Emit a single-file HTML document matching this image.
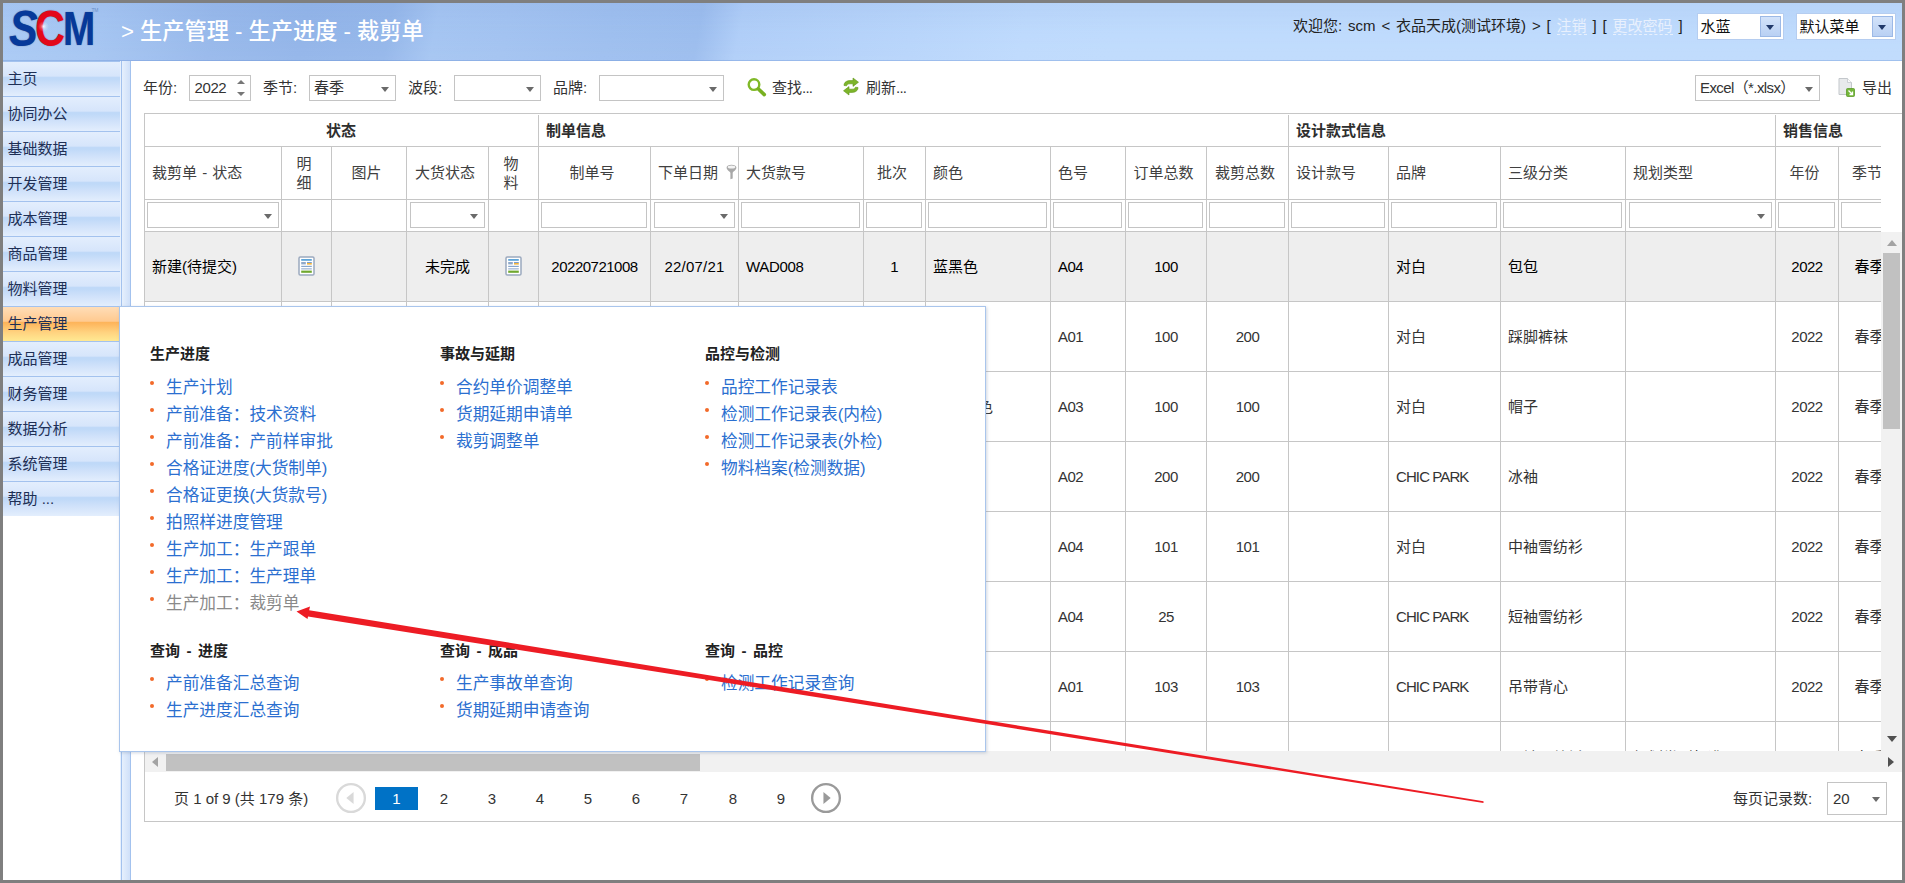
<!DOCTYPE html>
<html lang="zh-CN"><head><meta charset="utf-8"><title>SCM</title>
<style>
*{box-sizing:border-box;margin:0;padding:0}
html,body{width:1905px;height:883px;overflow:hidden;background:#fff}
body{font-family:"Liberation Sans", "Noto Sans CJK SC", sans-serif;font-size:15px;color:#333;position:relative}
.abs{position:absolute}
.t{position:absolute;white-space:nowrap;line-height:20px;height:20px}
.frame{position:absolute;background:#7f7f7f;z-index:100}
#hdr{position:absolute;left:3px;top:3px;width:1899px;height:58px;
 background:linear-gradient(100deg,#aacaf5 0px,#a5c5f2 100px,#98b9eb 210px,#93b5e9 300px,#95b7ea 385px,#a5c5f2 430px,#a3c3f1 500px,#9ebfef 600px,#9cbdee 690px,#b0cef8 730px,#b8d5fb 900px,#bedafd 1010px,#bfdbfd 1100px,#bfdbfd 1899px);}
#hdr:after{content:"";position:absolute;left:0;right:0;top:0;bottom:0;background:linear-gradient(180deg,rgba(110,145,205,.10),rgba(255,255,255,0) 55%,rgba(255,255,255,.04));border-bottom:1px solid rgba(110,150,215,.30)}
#title{font-weight:500;position:absolute;left:121px;top:17px;font-size:22.2px;line-height:30px;color:#fff;white-space:nowrap;z-index:2}
.hsel{position:absolute;top:13px;height:27px;background:#fff;border:1px solid #b5cdf0;z-index:2}
.hsel .b{position:absolute;right:2px;top:2px;width:21px;height:21px;border:1px solid #9cb9e6;background:linear-gradient(180deg,#d3e3fa,#b9d0f3)}
.hsel .b:after{content:"";position:absolute;left:5px;top:8px;border:4.5px solid transparent;border-top:5px solid #21396a;border-bottom:0}
.hsel span{position:absolute;left:2.5px;top:3px;line-height:20px;color:#111}
.mi{position:absolute;left:3px;width:117px;height:35px;border-top:1px solid #a3c2ee;
 background:linear-gradient(180deg,#e3eefd 0%,#d6e5fb 42%,#c0d9f8 44%,#bfd9f8 50%,#cfe1fa 70%,#e3eefd 100%);
 padding-left:4.5px;line-height:33px;color:#1e2f55;white-space:nowrap}
.mi.act{width:116px;background:linear-gradient(180deg,#ffddb7 0%,#ffca90 42%,#fdb45a 45%,#feba62 52%,#ffd380 75%,#ffe992 100%)}
.box{position:absolute;background:#fff;border:1px solid #c4c4c4}
.dd:after{content:"";position:absolute;right:6px;top:50%;margin-top:-1.5px;border:4.5px solid transparent;border-top:5px solid #6a6a6a;border-bottom:0}
.vl{position:absolute;width:1px;background:#c6c6c6}
.hl{position:absolute;height:1px;background:#c6c6c6}
.c{position:absolute;white-space:nowrap;line-height:20px;height:20px}
.cc{text-align:center}
#pop{position:absolute;left:119px;top:306px;width:867px;height:446px;background:#fff;border:1px solid #a9c5ec;box-shadow:1px 1px 3px rgba(120,140,170,.35);z-index:20}
.ph{word-spacing:2.3px;position:absolute;font-weight:bold;font-size:15px;line-height:20px;color:#222;white-space:nowrap}
.pl{position:absolute;font-size:16.7px;line-height:22px;color:#2b6fd0;white-space:nowrap}
.pl.g{color:#8a8a8a}
.pl:before{content:"";position:absolute;left:-16px;top:4px;width:4px;height:4px;border-radius:2px;background:#f26a2a}
.lg{position:absolute;font-weight:bold;font-size:40px;line-height:50px;transform-origin:0 0;white-space:nowrap;text-shadow:0 0 1px rgba(10,20,60,.55)}
.pg{position:absolute;top:787px;width:43px;height:23px;line-height:23px;text-align:center;color:#333}
</style></head>
<body>
<div id="hdr"></div>
<div class="abs" style="left:0;top:0;width:110px;height:58px;z-index:2;overflow:hidden"><div class="lg" style="left:8.9px;top:-3.2px;color:#06399a;font-style:italic;transform:scale(1.08,1.257)">S</div><div class="lg" style="left:34.6px;top:-3.1px;color:#e3081a;transform:scale(1.038,1.246)">C</div><div class="lg" style="left:63px;top:-3.3px;color:#06399a;transform:scale(0.965,1.225)">M</div><div class="abs" style="left:38px;top:21px;width:11px;height:11px;border-radius:6px;background:radial-gradient(circle,rgba(255,255,255,.85) 0,rgba(255,255,255,.25) 35%,rgba(255,255,255,0) 70%)"></div><div style="position:absolute;left:91.5px;top:7.5px;font-size:5px;line-height:5px;color:#6d8fc8;letter-spacing:-.3px">TM</div></div>
<div id="title">&gt; 生产管理 - 生产进度 - 裁剪单</div>
<div class="t" style="left:1293px;top:16px;z-index:2;color:#222;word-spacing:1.7px">欢迎您: scm &lt; 衣品天成(测试环境) &gt; [ <span style="color:#e8f0fd;border-bottom:1px dashed #e8f0fd">注销</span> ] [ <span style="color:#e8f0fd;border-bottom:1px dashed #e8f0fd">更改密码</span> ]</div>
<div class="hsel" style="left:1697px;width:87px"><span>水蓝</span><div class="b"></div></div>
<div class="hsel" style="left:1796px;width:100px"><span>默认菜单</span><div class="b"></div></div>
<div class="mi" style="top:61px">主页</div>
<div class="mi" style="top:96px">协同办公</div>
<div class="mi" style="top:131px">基础数据</div>
<div class="mi" style="top:166px">开发管理</div>
<div class="mi" style="top:201px">成本管理</div>
<div class="mi" style="top:236px">商品管理</div>
<div class="mi" style="top:271px">物料管理</div>
<div class="mi act" style="top:306px">生产管理</div>
<div class="mi" style="top:341px">成品管理</div>
<div class="mi" style="top:376px">财务管理</div>
<div class="mi" style="top:411px">数据分析</div>
<div class="mi" style="top:446px">系统管理</div>
<div class="mi" style="top:481px">帮助 ...</div>
<div class="abs" style="left:120px;top:61px;width:1px;height:819px;background:#e8f1fd"></div>
<div class="abs" style="left:121px;top:61px;width:10px;height:819px;border-left:1px solid #a3c2ee;border-right:1px solid #a3c2ee;background:linear-gradient(90deg,#e6f0fd,#cfe0f9)"></div>
<div class="t" style="left:143px;top:78px">年份:</div>
<div class="box" style="left:189px;top:75px;width:62px;height:26px"><span class="t" style="left:4.5px;top:2px;letter-spacing:-.4px">2022</span><i class="abs" style="left:47px;top:4px;border:4px solid transparent;border-bottom:4.5px solid #777;border-top:0"></i><i class="abs" style="left:47px;top:15.5px;border:4px solid transparent;border-top:4.5px solid #777;border-bottom:0"></i></div>
<div class="t" style="left:263px;top:78px">季节:</div>
<div class="box dd" style="left:309px;top:75px;width:87px;height:26px"><span class="t" style="left:4px;top:2px">春季</span></div>
<div class="t" style="left:408px;top:78px">波段:</div>
<div class="box dd" style="left:454px;top:75px;width:87px;height:26px"></div>
<div class="t" style="left:553px;top:78px">品牌:</div>
<div class="box dd" style="left:599px;top:75px;width:125px;height:26px"></div>
<svg class="abs" style="left:746px;top:77px" width="22" height="22" viewBox="0 0 22 22"><circle cx="8" cy="7.6" r="5.3" fill="none" stroke="#80b928" stroke-width="2.4"/><line x1="12.4" y1="12" x2="18.3" y2="17.6" stroke="#78b020" stroke-width="3.6" stroke-linecap="round"/></svg>
<div class="t" style="left:772px;top:78px">查找<span style="letter-spacing:-.8px">...</span></div>
<svg class="abs" style="left:842px;top:77px" width="18" height="19" viewBox="0 0 18 19"><path d="M2 8.5 C2 5 5 3.6 8 3.6 L11 3.6 L11 1 L16.5 5.2 L11 9.4 L11 6.8 L8 6.8 C6 6.8 5 7.4 4.6 8.8 Z" fill="#7db52a" stroke="#5f9418" stroke-width=".6"/><path d="M16 10.5 C16 14 13 15.4 10 15.4 L7 15.4 L7 18 L1.5 13.8 L7 9.6 L7 12.2 L10 12.2 C12 12.2 13 11.6 13.4 10.2 Z" fill="#7db52a" stroke="#5f9418" stroke-width=".6"/></svg>
<div class="t" style="left:866px;top:78px">刷新<span style="letter-spacing:-.8px">...</span></div>
<div class="box dd" style="left:1695px;top:75px;width:125px;height:26px"><span class="t" style="left:4px;top:2px;letter-spacing:-.6px">Excel（*.xlsx）</span></div>
<svg class="abs" style="left:1838px;top:78px" width="18" height="19" viewBox="0 0 18 19"><path d="M1 .5 H9.5 L13.5 4.5 V16.5 H1 Z" fill="#e8eaec" stroke="#c3c7cb" stroke-width="1"/><path d="M9.5 .5 V4.5 H13.5" fill="#fafafa" stroke="#c3c7cb" stroke-width=".8"/><rect x="8.5" y="10.5" width="8" height="8" rx="1" fill="#74b63a" stroke="#5a9a28" stroke-width=".8"/><path d="M10.5 12.5 L14.5 16.5 M14.5 13.5 V16.5 H11.5" stroke="#fff" stroke-width="1.3" fill="none"/></svg>
<div class="t" style="left:1862px;top:78px">导出</div>
<div class="abs" style="left:144px;top:113px;width:1758px;height:709px;overflow:hidden" id="grid">
<div class="abs" style="left:0;top:119px;width:1737px;height:69px;background:#eeeeee"></div>
<div class="hl" style="left:0;top:0;width:1758px"></div>
<div class="hl" style="left:0;top:33px;width:1737px"></div>
<div class="hl" style="left:0;top:86px;width:1737px"></div>
<div class="hl" style="left:0;top:118px;width:1737px"></div>
<div class="hl" style="left:0;top:188px;width:1737px"></div>
<div class="hl" style="left:0;top:258px;width:1737px"></div>
<div class="hl" style="left:0;top:328px;width:1737px"></div>
<div class="hl" style="left:0;top:398px;width:1737px"></div>
<div class="hl" style="left:0;top:468px;width:1737px"></div>
<div class="hl" style="left:0;top:538px;width:1737px"></div>
<div class="hl" style="left:0;top:608px;width:1737px"></div>
<div class="vl" style="left:0;top:0;height:709px"></div>
<div class="vl" style="left:137px;top:33px;height:605px"></div>
<div class="vl" style="left:187px;top:33px;height:605px"></div>
<div class="vl" style="left:262px;top:33px;height:605px"></div>
<div class="vl" style="left:344px;top:33px;height:605px"></div>
<div class="vl" style="left:394px;top:2px;height:636px"></div>
<div class="vl" style="left:506px;top:33px;height:605px"></div>
<div class="vl" style="left:594px;top:33px;height:605px"></div>
<div class="vl" style="left:719px;top:33px;height:605px"></div>
<div class="vl" style="left:781px;top:33px;height:605px"></div>
<div class="vl" style="left:906px;top:33px;height:605px"></div>
<div class="vl" style="left:981px;top:33px;height:605px"></div>
<div class="vl" style="left:1062px;top:33px;height:605px"></div>
<div class="vl" style="left:1144px;top:2px;height:636px"></div>
<div class="vl" style="left:1244px;top:33px;height:605px"></div>
<div class="vl" style="left:1356px;top:33px;height:605px"></div>
<div class="vl" style="left:1481px;top:33px;height:605px"></div>
<div class="vl" style="left:1631px;top:2px;height:636px"></div>
<div class="vl" style="left:1694px;top:33px;height:605px"></div>
<div class="c cc" style="left:0px;top:8px;width:394px;font-weight:bold;color:#2e2e2e;">状态</div>
<div class="c" style="left:402px;top:8px;font-weight:bold;color:#2e2e2e;">制单信息</div>
<div class="c" style="left:1152px;top:8px;font-weight:bold;color:#2e2e2e;">设计款式信息</div>
<div class="c" style="left:1639px;top:8px;font-weight:bold;color:#2e2e2e;">销售信息</div>
<div class="c" style="left:8px;top:50px;color:#404040;word-spacing:1px;">裁剪单 - 状态</div>
<div class="c cc" style="left:135px;top:41px;width:50px;height:40px;line-height:19px;color:#404040">明<br>细</div>
<div class="c cc" style="left:185px;top:50px;width:75px;color:#404040;">图片</div>
<div class="c cc" style="left:260px;top:50px;width:82px;color:#404040;">大货状态</div>
<div class="c cc" style="left:342px;top:41px;width:50px;height:40px;line-height:19px;color:#404040">物<br>料</div>
<div class="c cc" style="left:392px;top:50px;width:112px;color:#404040;">制单号</div>
<div class="c" style="left:514px;top:50px;color:#404040;word-spacing:1px;">下单日期</div>
<div class="c" style="left:602px;top:50px;color:#404040;word-spacing:1px;">大货款号</div>
<div class="c cc" style="left:717px;top:50px;width:62px;color:#404040;">批次</div>
<div class="c" style="left:789px;top:50px;color:#404040;word-spacing:1px;">颜色</div>
<div class="c" style="left:914px;top:50px;color:#404040;word-spacing:1px;">色号</div>
<div class="c cc" style="left:979px;top:50px;width:81px;color:#404040;">订单总数</div>
<div class="c cc" style="left:1060px;top:50px;width:82px;color:#404040;">裁剪总数</div>
<div class="c" style="left:1152px;top:50px;color:#404040;word-spacing:1px;">设计款号</div>
<div class="c" style="left:1252px;top:50px;color:#404040;word-spacing:1px;">品牌</div>
<div class="c" style="left:1364px;top:50px;color:#404040;word-spacing:1px;">三级分类</div>
<div class="c" style="left:1489px;top:50px;color:#404040;word-spacing:1px;">规划类型</div>
<div class="c cc" style="left:1629px;top:50px;width:63px;color:#404040;">年份</div>
<div class="c cc" style="left:1692px;top:50px;width:62px;color:#404040;">季节</div>
<svg class="abs" style="left:581px;top:50px" width="13" height="17" viewBox="0 0 13 17"><path d="M1.6 4.6 C1.6 0.9 11.4 0.9 11.4 4.6 C11.4 7.4 8 8.4 7.7 10 L7.7 15.4 L5.4 16.2 L5.4 10 C5 8.4 1.6 7.4 1.6 4.6 Z" fill="#a8a8a8"/><ellipse cx="6.5" cy="4" rx="3.8" ry="1.5" fill="#f3f3f3"/></svg>
<div class="box dd" style="left:3px;top:89px;width:132px;height:26px"></div>
<div class="box dd" style="left:266px;top:89px;width:75px;height:26px"></div>
<div class="box" style="left:397px;top:89px;width:106px;height:26px"></div>
<div class="box dd" style="left:510px;top:89px;width:81px;height:26px"></div>
<div class="box" style="left:597px;top:89px;width:119px;height:26px"></div>
<div class="box" style="left:722px;top:89px;width:56px;height:26px"></div>
<div class="box" style="left:784px;top:89px;width:119px;height:26px"></div>
<div class="box" style="left:909px;top:89px;width:69px;height:26px"></div>
<div class="box" style="left:984px;top:89px;width:75px;height:26px"></div>
<div class="box" style="left:1065px;top:89px;width:76px;height:26px"></div>
<div class="box" style="left:1147px;top:89px;width:94px;height:26px"></div>
<div class="box" style="left:1247px;top:89px;width:106px;height:26px"></div>
<div class="box" style="left:1359px;top:89px;width:119px;height:26px"></div>
<div class="box dd" style="left:1485px;top:89px;width:143px;height:26px"></div>
<div class="box" style="left:1634px;top:89px;width:57px;height:26px"></div>
<div class="box" style="left:1697px;top:89px;width:60px;height:26px"></div>
<div class="c" style="left:8px;top:144px;color:#000;">新建(待提交)</div>
<svg class="abs" style="left:154px;top:142.5px" width="17" height="20" viewBox="0 0 17 20"><rect x="1" y="1" width="15" height="18" rx="1.3" fill="#fff" stroke="#9ba9be" stroke-width="1.5"/><rect x="3.2" y="3" width="10.6" height="1.8" fill="#5fa5d8"/><rect x="3.2" y="6" width="4.6" height="2.4" fill="#8fa9c9"/><rect x="9" y="6" width="4.8" height="1" fill="#7c9fd0"/><rect x="9" y="7" width="4.8" height="1.6" fill="#f0b43c"/><rect x="3.2" y="9.8" width="10.6" height="1.2" fill="#86a6cc"/><rect x="3.2" y="12" width="10.6" height="1.6" fill="#b4c6de"/><rect x="3.2" y="14.6" width="10.6" height="2.2" fill="#6fa72e"/></svg>
<div class="c cc" style="left:262px;top:144px;width:83px;color:#000;">未完成</div>
<svg class="abs" style="left:361px;top:142.5px" width="17" height="20" viewBox="0 0 17 20"><rect x="1" y="1" width="15" height="18" rx="1.3" fill="#fff" stroke="#9ba9be" stroke-width="1.5"/><rect x="3.2" y="3" width="10.6" height="1.8" fill="#5fa5d8"/><rect x="3.2" y="6" width="4.6" height="2.4" fill="#8fa9c9"/><rect x="9" y="6" width="4.8" height="1" fill="#7c9fd0"/><rect x="9" y="7" width="4.8" height="1.6" fill="#f0b43c"/><rect x="3.2" y="9.8" width="10.6" height="1.2" fill="#86a6cc"/><rect x="3.2" y="12" width="10.6" height="1.6" fill="#b4c6de"/><rect x="3.2" y="14.6" width="10.6" height="2.2" fill="#6fa72e"/></svg>
<div class="c cc" style="left:394px;top:144px;width:113px;letter-spacing:-0.5px;color:#000;">20220721008</div>
<div class="c cc" style="left:506px;top:144px;width:89px;letter-spacing:0.2px;color:#000;">22/07/21</div>
<div class="c" style="left:602px;top:144px;letter-spacing:-0.3px;color:#000;">WAD008</div>
<div class="c cc" style="left:719px;top:144px;width:63px;color:#000;">1</div>
<div class="c" style="left:789px;top:144px;color:#000;">蓝黑色</div>
<div class="c" style="left:914px;top:144px;letter-spacing:-0.5px;color:#000;">A04</div>
<div class="c cc" style="left:981px;top:144px;width:82px;letter-spacing:-0.5px;color:#000;">100</div>
<div class="c" style="left:1252px;top:144px;color:#000;">对白</div>
<div class="c" style="left:1364px;top:144px;color:#000;">包包</div>
<div class="c cc" style="left:1631px;top:144px;width:64px;letter-spacing:-0.5px;color:#000;">2022</div>
<div class="c cc" style="left:1694px;top:144px;width:63px;color:#000;">春季</div>
<div class="c" style="left:8px;top:214px;">新建(待提交)</div>
<svg class="abs" style="left:154px;top:212.5px" width="17" height="20" viewBox="0 0 17 20"><rect x="1" y="1" width="15" height="18" rx="1.3" fill="#fff" stroke="#9ba9be" stroke-width="1.5"/><rect x="3.2" y="3" width="10.6" height="1.8" fill="#5fa5d8"/><rect x="3.2" y="6" width="4.6" height="2.4" fill="#8fa9c9"/><rect x="9" y="6" width="4.8" height="1" fill="#7c9fd0"/><rect x="9" y="7" width="4.8" height="1.6" fill="#f0b43c"/><rect x="3.2" y="9.8" width="10.6" height="1.2" fill="#86a6cc"/><rect x="3.2" y="12" width="10.6" height="1.6" fill="#b4c6de"/><rect x="3.2" y="14.6" width="10.6" height="2.2" fill="#6fa72e"/></svg>
<div class="c cc" style="left:262px;top:214px;width:83px;">未完成</div>
<svg class="abs" style="left:361px;top:212.5px" width="17" height="20" viewBox="0 0 17 20"><rect x="1" y="1" width="15" height="18" rx="1.3" fill="#fff" stroke="#9ba9be" stroke-width="1.5"/><rect x="3.2" y="3" width="10.6" height="1.8" fill="#5fa5d8"/><rect x="3.2" y="6" width="4.6" height="2.4" fill="#8fa9c9"/><rect x="9" y="6" width="4.8" height="1" fill="#7c9fd0"/><rect x="9" y="7" width="4.8" height="1.6" fill="#f0b43c"/><rect x="3.2" y="9.8" width="10.6" height="1.2" fill="#86a6cc"/><rect x="3.2" y="12" width="10.6" height="1.6" fill="#b4c6de"/><rect x="3.2" y="14.6" width="10.6" height="2.2" fill="#6fa72e"/></svg>
<div class="c cc" style="left:394px;top:214px;width:113px;letter-spacing:-0.5px;">20220721007</div>
<div class="c cc" style="left:506px;top:214px;width:89px;letter-spacing:0.2px;">22/07/21</div>
<div class="c" style="left:602px;top:214px;letter-spacing:-0.3px;">WAD007</div>
<div class="c cc" style="left:719px;top:214px;width:63px;">1</div>
<div class="c" style="left:789px;top:214px;">黑色</div>
<div class="c" style="left:914px;top:214px;letter-spacing:-0.5px;">A01</div>
<div class="c cc" style="left:981px;top:214px;width:82px;letter-spacing:-0.5px;">100</div>
<div class="c cc" style="left:1062px;top:214px;width:83px;letter-spacing:-0.5px;">200</div>
<div class="c" style="left:1252px;top:214px;">对白</div>
<div class="c" style="left:1364px;top:214px;">踩脚裤袜</div>
<div class="c cc" style="left:1631px;top:214px;width:64px;letter-spacing:-0.5px;">2022</div>
<div class="c cc" style="left:1694px;top:214px;width:63px;">春季</div>
<div class="c" style="left:8px;top:284px;">新建(待提交)</div>
<svg class="abs" style="left:154px;top:282.5px" width="17" height="20" viewBox="0 0 17 20"><rect x="1" y="1" width="15" height="18" rx="1.3" fill="#fff" stroke="#9ba9be" stroke-width="1.5"/><rect x="3.2" y="3" width="10.6" height="1.8" fill="#5fa5d8"/><rect x="3.2" y="6" width="4.6" height="2.4" fill="#8fa9c9"/><rect x="9" y="6" width="4.8" height="1" fill="#7c9fd0"/><rect x="9" y="7" width="4.8" height="1.6" fill="#f0b43c"/><rect x="3.2" y="9.8" width="10.6" height="1.2" fill="#86a6cc"/><rect x="3.2" y="12" width="10.6" height="1.6" fill="#b4c6de"/><rect x="3.2" y="14.6" width="10.6" height="2.2" fill="#6fa72e"/></svg>
<div class="c cc" style="left:262px;top:284px;width:83px;">未完成</div>
<svg class="abs" style="left:361px;top:282.5px" width="17" height="20" viewBox="0 0 17 20"><rect x="1" y="1" width="15" height="18" rx="1.3" fill="#fff" stroke="#9ba9be" stroke-width="1.5"/><rect x="3.2" y="3" width="10.6" height="1.8" fill="#5fa5d8"/><rect x="3.2" y="6" width="4.6" height="2.4" fill="#8fa9c9"/><rect x="9" y="6" width="4.8" height="1" fill="#7c9fd0"/><rect x="9" y="7" width="4.8" height="1.6" fill="#f0b43c"/><rect x="3.2" y="9.8" width="10.6" height="1.2" fill="#86a6cc"/><rect x="3.2" y="12" width="10.6" height="1.6" fill="#b4c6de"/><rect x="3.2" y="14.6" width="10.6" height="2.2" fill="#6fa72e"/></svg>
<div class="c cc" style="left:394px;top:284px;width:113px;letter-spacing:-0.5px;">20220721006</div>
<div class="c cc" style="left:506px;top:284px;width:89px;letter-spacing:0.2px;">22/07/21</div>
<div class="c" style="left:602px;top:284px;letter-spacing:-0.3px;">WAD006</div>
<div class="c cc" style="left:719px;top:284px;width:63px;">1</div>
<div class="c" style="left:789px;top:284px;">深花灰色</div>
<div class="c" style="left:914px;top:284px;letter-spacing:-0.5px;">A03</div>
<div class="c cc" style="left:981px;top:284px;width:82px;letter-spacing:-0.5px;">100</div>
<div class="c cc" style="left:1062px;top:284px;width:83px;letter-spacing:-0.5px;">100</div>
<div class="c" style="left:1252px;top:284px;">对白</div>
<div class="c" style="left:1364px;top:284px;">帽子</div>
<div class="c cc" style="left:1631px;top:284px;width:64px;letter-spacing:-0.5px;">2022</div>
<div class="c cc" style="left:1694px;top:284px;width:63px;">春季</div>
<div class="c" style="left:8px;top:354px;">新建(待提交)</div>
<svg class="abs" style="left:154px;top:352.5px" width="17" height="20" viewBox="0 0 17 20"><rect x="1" y="1" width="15" height="18" rx="1.3" fill="#fff" stroke="#9ba9be" stroke-width="1.5"/><rect x="3.2" y="3" width="10.6" height="1.8" fill="#5fa5d8"/><rect x="3.2" y="6" width="4.6" height="2.4" fill="#8fa9c9"/><rect x="9" y="6" width="4.8" height="1" fill="#7c9fd0"/><rect x="9" y="7" width="4.8" height="1.6" fill="#f0b43c"/><rect x="3.2" y="9.8" width="10.6" height="1.2" fill="#86a6cc"/><rect x="3.2" y="12" width="10.6" height="1.6" fill="#b4c6de"/><rect x="3.2" y="14.6" width="10.6" height="2.2" fill="#6fa72e"/></svg>
<div class="c cc" style="left:262px;top:354px;width:83px;">未完成</div>
<svg class="abs" style="left:361px;top:352.5px" width="17" height="20" viewBox="0 0 17 20"><rect x="1" y="1" width="15" height="18" rx="1.3" fill="#fff" stroke="#9ba9be" stroke-width="1.5"/><rect x="3.2" y="3" width="10.6" height="1.8" fill="#5fa5d8"/><rect x="3.2" y="6" width="4.6" height="2.4" fill="#8fa9c9"/><rect x="9" y="6" width="4.8" height="1" fill="#7c9fd0"/><rect x="9" y="7" width="4.8" height="1.6" fill="#f0b43c"/><rect x="3.2" y="9.8" width="10.6" height="1.2" fill="#86a6cc"/><rect x="3.2" y="12" width="10.6" height="1.6" fill="#b4c6de"/><rect x="3.2" y="14.6" width="10.6" height="2.2" fill="#6fa72e"/></svg>
<div class="c cc" style="left:394px;top:354px;width:113px;letter-spacing:-0.5px;">20220721005</div>
<div class="c cc" style="left:506px;top:354px;width:89px;letter-spacing:0.2px;">22/07/21</div>
<div class="c" style="left:602px;top:354px;letter-spacing:-0.3px;">WAD005</div>
<div class="c cc" style="left:719px;top:354px;width:63px;">1</div>
<div class="c" style="left:789px;top:354px;">白色</div>
<div class="c" style="left:914px;top:354px;letter-spacing:-0.5px;">A02</div>
<div class="c cc" style="left:981px;top:354px;width:82px;letter-spacing:-0.5px;">200</div>
<div class="c cc" style="left:1062px;top:354px;width:83px;letter-spacing:-0.5px;">200</div>
<div class="c" style="left:1252px;top:354px;letter-spacing:-0.9px;">CHIC PARK</div>
<div class="c" style="left:1364px;top:354px;">冰袖</div>
<div class="c cc" style="left:1631px;top:354px;width:64px;letter-spacing:-0.5px;">2022</div>
<div class="c cc" style="left:1694px;top:354px;width:63px;">春季</div>
<div class="c" style="left:8px;top:424px;">新建(待提交)</div>
<svg class="abs" style="left:154px;top:422.5px" width="17" height="20" viewBox="0 0 17 20"><rect x="1" y="1" width="15" height="18" rx="1.3" fill="#fff" stroke="#9ba9be" stroke-width="1.5"/><rect x="3.2" y="3" width="10.6" height="1.8" fill="#5fa5d8"/><rect x="3.2" y="6" width="4.6" height="2.4" fill="#8fa9c9"/><rect x="9" y="6" width="4.8" height="1" fill="#7c9fd0"/><rect x="9" y="7" width="4.8" height="1.6" fill="#f0b43c"/><rect x="3.2" y="9.8" width="10.6" height="1.2" fill="#86a6cc"/><rect x="3.2" y="12" width="10.6" height="1.6" fill="#b4c6de"/><rect x="3.2" y="14.6" width="10.6" height="2.2" fill="#6fa72e"/></svg>
<div class="c cc" style="left:262px;top:424px;width:83px;">未完成</div>
<svg class="abs" style="left:361px;top:422.5px" width="17" height="20" viewBox="0 0 17 20"><rect x="1" y="1" width="15" height="18" rx="1.3" fill="#fff" stroke="#9ba9be" stroke-width="1.5"/><rect x="3.2" y="3" width="10.6" height="1.8" fill="#5fa5d8"/><rect x="3.2" y="6" width="4.6" height="2.4" fill="#8fa9c9"/><rect x="9" y="6" width="4.8" height="1" fill="#7c9fd0"/><rect x="9" y="7" width="4.8" height="1.6" fill="#f0b43c"/><rect x="3.2" y="9.8" width="10.6" height="1.2" fill="#86a6cc"/><rect x="3.2" y="12" width="10.6" height="1.6" fill="#b4c6de"/><rect x="3.2" y="14.6" width="10.6" height="2.2" fill="#6fa72e"/></svg>
<div class="c cc" style="left:394px;top:424px;width:113px;letter-spacing:-0.5px;">20220721004</div>
<div class="c cc" style="left:506px;top:424px;width:89px;letter-spacing:0.2px;">22/07/21</div>
<div class="c" style="left:602px;top:424px;letter-spacing:-0.3px;">WAD004</div>
<div class="c cc" style="left:719px;top:424px;width:63px;">1</div>
<div class="c" style="left:789px;top:424px;">蓝黑色</div>
<div class="c" style="left:914px;top:424px;letter-spacing:-0.5px;">A04</div>
<div class="c cc" style="left:981px;top:424px;width:82px;letter-spacing:-0.5px;">101</div>
<div class="c cc" style="left:1062px;top:424px;width:83px;letter-spacing:-0.5px;">101</div>
<div class="c" style="left:1252px;top:424px;">对白</div>
<div class="c" style="left:1364px;top:424px;">中袖雪纺衫</div>
<div class="c cc" style="left:1631px;top:424px;width:64px;letter-spacing:-0.5px;">2022</div>
<div class="c cc" style="left:1694px;top:424px;width:63px;">春季</div>
<div class="c" style="left:8px;top:494px;">新建(待提交)</div>
<svg class="abs" style="left:154px;top:492.5px" width="17" height="20" viewBox="0 0 17 20"><rect x="1" y="1" width="15" height="18" rx="1.3" fill="#fff" stroke="#9ba9be" stroke-width="1.5"/><rect x="3.2" y="3" width="10.6" height="1.8" fill="#5fa5d8"/><rect x="3.2" y="6" width="4.6" height="2.4" fill="#8fa9c9"/><rect x="9" y="6" width="4.8" height="1" fill="#7c9fd0"/><rect x="9" y="7" width="4.8" height="1.6" fill="#f0b43c"/><rect x="3.2" y="9.8" width="10.6" height="1.2" fill="#86a6cc"/><rect x="3.2" y="12" width="10.6" height="1.6" fill="#b4c6de"/><rect x="3.2" y="14.6" width="10.6" height="2.2" fill="#6fa72e"/></svg>
<div class="c cc" style="left:262px;top:494px;width:83px;">未完成</div>
<svg class="abs" style="left:361px;top:492.5px" width="17" height="20" viewBox="0 0 17 20"><rect x="1" y="1" width="15" height="18" rx="1.3" fill="#fff" stroke="#9ba9be" stroke-width="1.5"/><rect x="3.2" y="3" width="10.6" height="1.8" fill="#5fa5d8"/><rect x="3.2" y="6" width="4.6" height="2.4" fill="#8fa9c9"/><rect x="9" y="6" width="4.8" height="1" fill="#7c9fd0"/><rect x="9" y="7" width="4.8" height="1.6" fill="#f0b43c"/><rect x="3.2" y="9.8" width="10.6" height="1.2" fill="#86a6cc"/><rect x="3.2" y="12" width="10.6" height="1.6" fill="#b4c6de"/><rect x="3.2" y="14.6" width="10.6" height="2.2" fill="#6fa72e"/></svg>
<div class="c cc" style="left:394px;top:494px;width:113px;letter-spacing:-0.5px;">20220721003</div>
<div class="c cc" style="left:506px;top:494px;width:89px;letter-spacing:0.2px;">22/07/21</div>
<div class="c" style="left:602px;top:494px;letter-spacing:-0.3px;">WAD003</div>
<div class="c cc" style="left:719px;top:494px;width:63px;">1</div>
<div class="c" style="left:789px;top:494px;">蓝黑色</div>
<div class="c" style="left:914px;top:494px;letter-spacing:-0.5px;">A04</div>
<div class="c cc" style="left:981px;top:494px;width:82px;letter-spacing:-0.5px;">25</div>
<div class="c" style="left:1252px;top:494px;letter-spacing:-0.9px;">CHIC PARK</div>
<div class="c" style="left:1364px;top:494px;">短袖雪纺衫</div>
<div class="c cc" style="left:1631px;top:494px;width:64px;letter-spacing:-0.5px;">2022</div>
<div class="c cc" style="left:1694px;top:494px;width:63px;">春季</div>
<div class="c" style="left:8px;top:564px;">新建(待提交)</div>
<svg class="abs" style="left:154px;top:562.5px" width="17" height="20" viewBox="0 0 17 20"><rect x="1" y="1" width="15" height="18" rx="1.3" fill="#fff" stroke="#9ba9be" stroke-width="1.5"/><rect x="3.2" y="3" width="10.6" height="1.8" fill="#5fa5d8"/><rect x="3.2" y="6" width="4.6" height="2.4" fill="#8fa9c9"/><rect x="9" y="6" width="4.8" height="1" fill="#7c9fd0"/><rect x="9" y="7" width="4.8" height="1.6" fill="#f0b43c"/><rect x="3.2" y="9.8" width="10.6" height="1.2" fill="#86a6cc"/><rect x="3.2" y="12" width="10.6" height="1.6" fill="#b4c6de"/><rect x="3.2" y="14.6" width="10.6" height="2.2" fill="#6fa72e"/></svg>
<div class="c cc" style="left:262px;top:564px;width:83px;">未完成</div>
<svg class="abs" style="left:361px;top:562.5px" width="17" height="20" viewBox="0 0 17 20"><rect x="1" y="1" width="15" height="18" rx="1.3" fill="#fff" stroke="#9ba9be" stroke-width="1.5"/><rect x="3.2" y="3" width="10.6" height="1.8" fill="#5fa5d8"/><rect x="3.2" y="6" width="4.6" height="2.4" fill="#8fa9c9"/><rect x="9" y="6" width="4.8" height="1" fill="#7c9fd0"/><rect x="9" y="7" width="4.8" height="1.6" fill="#f0b43c"/><rect x="3.2" y="9.8" width="10.6" height="1.2" fill="#86a6cc"/><rect x="3.2" y="12" width="10.6" height="1.6" fill="#b4c6de"/><rect x="3.2" y="14.6" width="10.6" height="2.2" fill="#6fa72e"/></svg>
<div class="c cc" style="left:394px;top:564px;width:113px;letter-spacing:-0.5px;">20220721002</div>
<div class="c cc" style="left:506px;top:564px;width:89px;letter-spacing:0.2px;">22/07/21</div>
<div class="c" style="left:602px;top:564px;letter-spacing:-0.3px;">WAD002</div>
<div class="c cc" style="left:719px;top:564px;width:63px;">1</div>
<div class="c" style="left:789px;top:564px;">黑色</div>
<div class="c" style="left:914px;top:564px;letter-spacing:-0.5px;">A01</div>
<div class="c cc" style="left:981px;top:564px;width:82px;letter-spacing:-0.5px;">103</div>
<div class="c cc" style="left:1062px;top:564px;width:83px;letter-spacing:-0.5px;">103</div>
<div class="c" style="left:1252px;top:564px;letter-spacing:-0.9px;">CHIC PARK</div>
<div class="c" style="left:1364px;top:564px;">吊带背心</div>
<div class="c cc" style="left:1631px;top:564px;width:64px;letter-spacing:-0.5px;">2022</div>
<div class="c cc" style="left:1694px;top:564px;width:63px;">春季</div>
<div class="c" style="left:1364px;top:635px;">无袖雪纺衫</div>
<div class="c" style="left:1489px;top:635px;">规划类型标准</div>
<div class="c cc" style="left:1694px;top:635px;width:63px;">春季</div>
<div class="abs" style="left:1737px;top:1px;width:30px;height:118px;background:#fff"></div>
<div class="abs" style="left:1737px;top:119px;width:21px;height:519px;background:#f1f1f1"></div>
<div class="abs" style="left:1739px;top:140px;width:17px;height:176px;background:#c1c1c1"></div>
<i class="abs" style="left:1743px;top:127px;border:5px solid transparent;border-bottom:6px solid #a3a3a3;border-top:0"></i>
<i class="abs" style="left:1743px;top:623px;border:5px solid transparent;border-top:6px solid #505050;border-bottom:0"></i>
<div class="abs" style="left:1px;top:638px;width:1760px;height:21px;background:#f1f1f1"></div>
<div class="abs" style="left:22px;top:641px;width:534px;height:17px;background:#c1c1c1"></div>
<i class="abs" style="left:8px;top:644px;border:5px solid transparent;border-right:6px solid #a3a3a3;border-left:0"></i>
<i class="abs" style="left:1744px;top:644px;border:5px solid transparent;border-left:6px solid #505050;border-right:0"></i>
<div class="abs" style="left:1px;top:659px;width:1760px;height:49px;background:#fff"></div>
<div class="hl" style="left:0;top:708px;width:1760px"></div>
<div class="c" style="left:30px;top:676px;">页 1 of 9 (共 179 条)</div>
<svg class="abs" style="left:191px;top:669px" width="32" height="32" viewBox="0 0 30 30"><circle cx="15" cy="15" r="13" fill="#fff" stroke="#d9d9d9" stroke-width="2.2"/><path d="M17.4 9.4 L10.6 15 L17.4 20.6 Z" fill="#d9d9d9"/></svg>
<div class="abs cc" style="left:231px;top:674px;width:43px;height:23px;line-height:23px;background:#0072c6;color:#fff">1</div>
<div class="abs cc" style="left:280px;top:674px;width:40px;height:23px;line-height:23px">2</div>
<div class="abs cc" style="left:328px;top:674px;width:40px;height:23px;line-height:23px">3</div>
<div class="abs cc" style="left:376px;top:674px;width:40px;height:23px;line-height:23px">4</div>
<div class="abs cc" style="left:424px;top:674px;width:40px;height:23px;line-height:23px">5</div>
<div class="abs cc" style="left:472px;top:674px;width:40px;height:23px;line-height:23px">6</div>
<div class="abs cc" style="left:520px;top:674px;width:40px;height:23px;line-height:23px">7</div>
<div class="abs cc" style="left:569px;top:674px;width:40px;height:23px;line-height:23px">8</div>
<div class="abs cc" style="left:617px;top:674px;width:40px;height:23px;line-height:23px">9</div>
<svg class="abs" style="left:666px;top:669px" width="32" height="32" viewBox="0 0 30 30"><circle cx="15" cy="15" r="13" fill="#fff" stroke="#9a9a9a" stroke-width="2.2"/><path d="M12.6 9.4 L19.4 15 L12.6 20.6 Z" fill="#9a9a9a"/></svg>
<div class="c" style="left:1589px;top:676px;">每页记录数:</div>
<div class="box dd" style="left:1683px;top:669px;width:60px;height:33px"><span class="t" style="left:5px;top:6px">20</span></div>
</div>
<div id="pop"><div class="ph" style="left:30px;top:37px">生产进度</div>
<div class="ph" style="left:320px;top:37px">事故与延期</div>
<div class="ph" style="left:585px;top:37px">品控与检测</div>
<div class="pl" style="left:46px;top:70px">生产计划</div>
<div class="pl" style="left:46px;top:97px">产前准备：技术资料</div>
<div class="pl" style="left:46px;top:124px">产前准备：产前样审批</div>
<div class="pl" style="left:46px;top:151px">合格证进度(大货制单)</div>
<div class="pl" style="left:46px;top:178px">合格证更换(大货款号)</div>
<div class="pl" style="left:46px;top:205px">拍照样进度管理</div>
<div class="pl" style="left:46px;top:232px">生产加工：生产跟单</div>
<div class="pl" style="left:46px;top:259px">生产加工：生产理单</div>
<div class="pl g" style="left:46px;top:286px">生产加工：裁剪单</div>
<div class="pl" style="left:336px;top:70px">合约单价调整单</div>
<div class="pl" style="left:336px;top:97px">货期延期申请单</div>
<div class="pl" style="left:336px;top:124px">裁剪调整单</div>
<div class="pl" style="left:601px;top:70px">品控工作记录表</div>
<div class="pl" style="left:601px;top:97px">检测工作记录表(内检)</div>
<div class="pl" style="left:601px;top:124px">检测工作记录表(外检)</div>
<div class="pl" style="left:601px;top:151px">物料档案(检测数据)</div>
<div class="ph" style="left:30px;top:334px">查询 - 进度</div>
<div class="ph" style="left:320px;top:334px">查询 - 成品</div>
<div class="ph" style="left:585px;top:334px">查询 - 品控</div>
<div class="pl" style="left:46px;top:366px">产前准备汇总查询</div>
<div class="pl" style="left:46px;top:393px">生产进度汇总查询</div>
<div class="pl" style="left:336px;top:366px">生产事故单查询</div>
<div class="pl" style="left:336px;top:393px">货期延期申请查询</div>
<div class="pl" style="left:601px;top:366px">检测工作记录查询</div></div>
<svg class="abs" style="left:0;top:0;z-index:50;pointer-events:none" width="1905" height="883" viewBox="0 0 1905 883"><polygon points="296.5,611.5 310,606.5 309.2,610.2 1483.5,801.2 1483.5,803 308,616.4 307.5,619" fill="#ed1c24"/></svg>
<div class="frame" style="left:0;top:0;width:1905px;height:3px"></div>
<div class="frame" style="left:0;top:880px;width:1905px;height:3px"></div>
<div class="frame" style="left:0;top:0;width:3px;height:883px"></div>
<div class="frame" style="left:1902px;top:0;width:3px;height:883px"></div>
</body></html>
